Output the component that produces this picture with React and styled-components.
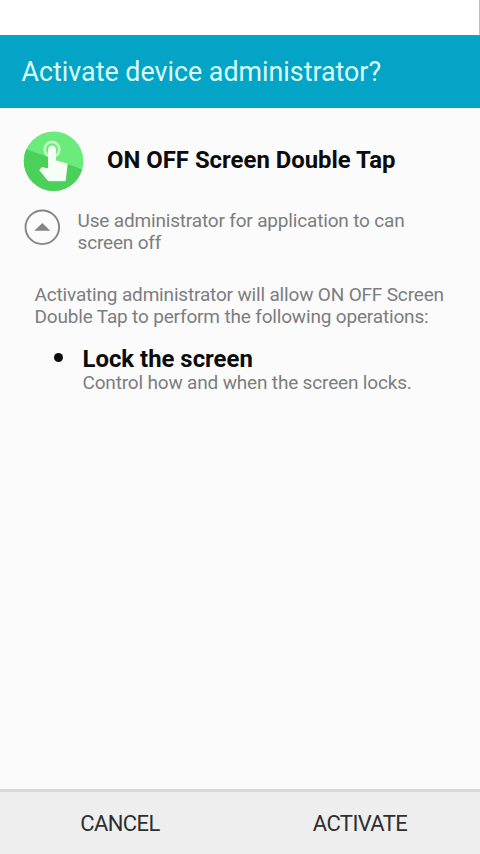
import React from "react";
import styled, { createGlobalStyle } from "styled-components";

const GlobalStyle = createGlobalStyle`
  *, *::before, *::after { box-sizing: border-box; }
  body { margin: 0; background: #fbfbfb; font-family: Roboto, sans-serif; }
  h1, h2, h3, p, ul { margin: 0; padding: 0; }
`;

const Screen = styled.div`
  display: flex;
  flex-direction: column;
  width: 480px;
  height: 854px;
  overflow: hidden;
  background: #fbfbfb;
`;

const StatusBar = styled.div`
  flex: none;
  height: 35px;
  background: #fff;
  border-right: 1px solid #b9c2c1;
`;

const Header = styled.header`
  flex: none;
  display: flex;
  align-items: center;
  height: 73px;
  padding-left: 21.5px;
  background: #03a4c6;
  border-top: 1px solid #2b99b3;
  border-bottom: 1px solid #1b9dbb;
`;

const Title = styled.h1`
  color: #d9fcff;
  font-size: 26.8px;
  font-weight: 400;
  line-height: 32px;
  white-space: nowrap;
`;

const Content = styled.main`
  flex: 1;
  display: flex;
  flex-direction: column;
`;

const AppRow = styled.section`
  display: flex;
  align-items: center;
  gap: 22px;
  height: 62px;
  margin: 22px 0 0 23px;
`;

const Strong = styled.h2`
  padding-bottom: 2px;
  color: #0b0c0c;
  font-size: 23.9px;
  font-weight: 700;
  line-height: 24px;
  white-space: nowrap;
`;

const Body = styled.p`
  color: #7b7d7f;
  font-size: 19px;
  line-height: 22px;
  letter-spacing: -0.17px;
  white-space: nowrap;
`;

const ReasonRow = styled.section`
  display: flex;
  align-items: center;
  gap: 16.5px;
  height: 44px;
  margin: 18px 0 0 24px;
`;

const Explanation = styled.section`
  margin: 30px 0 0 34.5px;
`;

const Policies = styled.ul`
  margin: 19px 0 0 54px;
  list-style: none;
`;

const Policy = styled.li`
  display: flex;
  gap: 19.5px;
`;

const PolicyText = styled.div`
  display: flex;
  flex-direction: column;
`;

const Bullet = styled.span`
  flex: none;
  width: 9px;
  height: 9px;
  margin-top: 6px;
  border-radius: 50%;
  background: #0b0c0c;
`;

const PolicyName = styled(Strong)`
  height: 25px;
  padding: 0;
`;

const Footer = styled.footer`
  flex: none;
  display: grid;
  grid-template-columns: 1fr 1fr;
  height: 65px;
  background: #eeeeee;
  border-top: 3px solid #d9d9d9;
`;

const FooterButton = styled.button`
  padding: 2px 0 0;
  border: 0;
  background: none;
  color: #2e2e2e;
  font: 400 22px/26px Roboto, sans-serif;
  letter-spacing: -0.6px;
`;

const Icon = styled.svg`
  flex: none;
  display: block;
`;

const RaisedIcon = styled(Icon)`
  margin-bottom: 9px;
`;

const TapIcon = () => (
  <Icon width="62" height="62" viewBox="0 0 62 62">
    <clipPath id="disc">
      <circle cx="30.6" cy="31.2" r="29.8" />
    </clipPath>
    <g clipPath="url(#disc)">
      <rect width="62" height="62" fill="#6ceb7d" />
      <path d="M0 17.9 L62 40.4 V62 H0Z" fill="#4bd059" />
    </g>
    <circle cx="29" cy="19.3" r="7.4" fill="none" stroke="#c6f9ca" strokeWidth="2.6" />
    <path
      d="M25.6 19.3a3.4 3.4 0 0 1 6.8 0v11.3l11.8 3.4-2 16.7H25.4L16.8 40.2l2-2.6 6.8 1.4Z"
      fill="#f5fff4"
      stroke="#f5fff4"
      strokeWidth="1"
      strokeLinejoin="round"
    />
  </Icon>
);

const CollapseIcon = () => (
  <RaisedIcon width="37" height="37" viewBox="0 0 37 37">
    <circle cx="18.3" cy="18.3" r="16.8" fill="none" stroke="#858585" strokeWidth="1.9" />
    <path d="M10.3 21.8 L18.3 14 L26.3 21.8Z" fill="#858585" />
  </RaisedIcon>
);

export default function App() {
  return (
    <>
      <GlobalStyle />
      <Screen>
        <StatusBar />
        <Header>
          <Title>Activate device administrator?</Title>
        </Header>
        <Content>
          <AppRow>
            <TapIcon />
            <Strong>ON OFF Screen Double Tap</Strong>
          </AppRow>
          <ReasonRow>
            <CollapseIcon />
            <Body>
              Use administrator for application to can
              <br />
              screen off
            </Body>
          </ReasonRow>
          <Explanation>
            <Body>
              Activating administrator will allow ON OFF Screen
              <br />
              Double Tap to perform the following operations:
            </Body>
          </Explanation>
          <Policies>
            <Policy>
              <Bullet />
              <PolicyText>
                <PolicyName as="h3">Lock the screen</PolicyName>
                <Body>Control how and when the screen locks.</Body>
              </PolicyText>
            </Policy>
          </Policies>
        </Content>
        <Footer>
          <FooterButton>CANCEL</FooterButton>
          <FooterButton>ACTIVATE</FooterButton>
        </Footer>
      </Screen>
    </>
  );
}
